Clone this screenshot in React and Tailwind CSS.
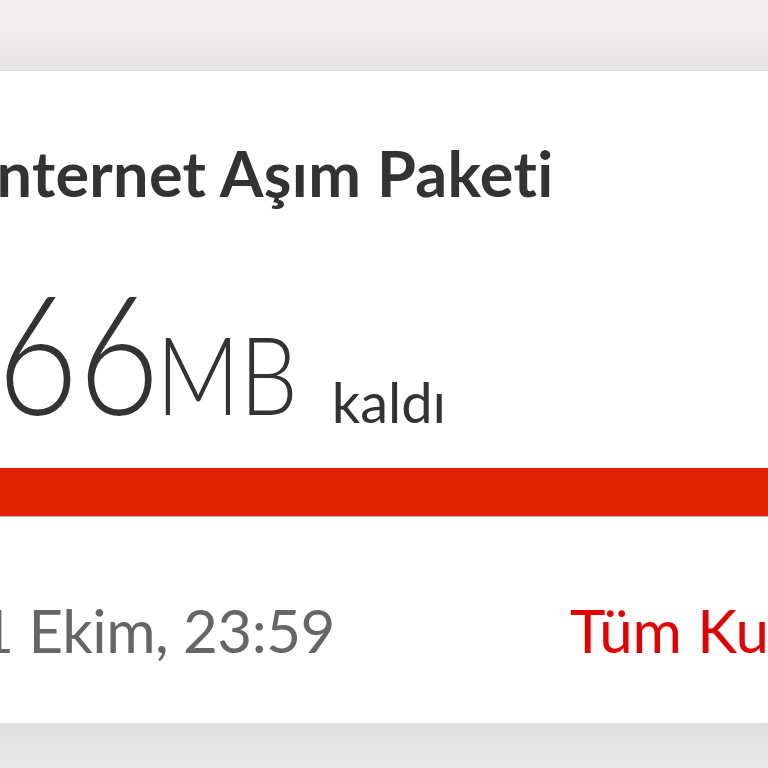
import React from 'react';

const PackageCard = () => {
  return (
    <div className="bg-white h-[652px] overflow-hidden text-[#333333]">
      {/* Başlık */}
      <div className="pt-[70px] -ml-[22px] whitespace-nowrap">
        <h2 className="text-[63px] leading-none font-bold tracking-[0.3px]">Internet Aşım Paketi</h2>
      </div>

      {/* Kalan miktar */}
      <div className="mt-[65px] -ml-[3px] flex items-baseline whitespace-nowrap">
        <span className="inline-flex items-baseline origin-left scale-x-[0.85]">
          <span className="text-[165px] leading-none font-light">66</span>
          <span className="text-[108px] leading-none font-light -ml-[4px]">MB</span>
        </span>
        <span className="text-[56px] leading-none font-normal -ml-[19px] relative top-[8px]">kaldı</span>
      </div>

      {/* Kullanım çubuğu */}
      <div className="mt-[34px] h-[49px] bg-[#e02200] border-b border-[#b8b0ae]" />

      {/* Alt satır */}
      <div className="mt-[83px] -ml-[55px] flex items-baseline whitespace-nowrap text-[60px] leading-none">
        <span className="w-[625px] shrink-0 text-[#666666] tracking-[-0.5px]">31 Ekim, 23:59</span>
        <span className="text-[#e60000]">Tüm Kullanımlar</span>
      </div>
    </div>
  );
};

const App = () => {
  return (
    <div
      className="w-[768px] h-[768px] flex flex-col bg-[#ebe9ea] overflow-hidden"
      style={{ fontFamily: 'Lato, "Open Sans", sans-serif' }}
    >
      <div className="h-[71px] shrink-0 bg-gradient-to-b from-[#f0eeef] via-[#efedee] to-[#e6e4e5] border-b border-[#dddbdc]" />
      <PackageCard />
      <div className="flex-1 bg-gradient-to-b from-[#e0dfe0] to-[#ebeaeb]" />
    </div>
  );
};

export default App;
